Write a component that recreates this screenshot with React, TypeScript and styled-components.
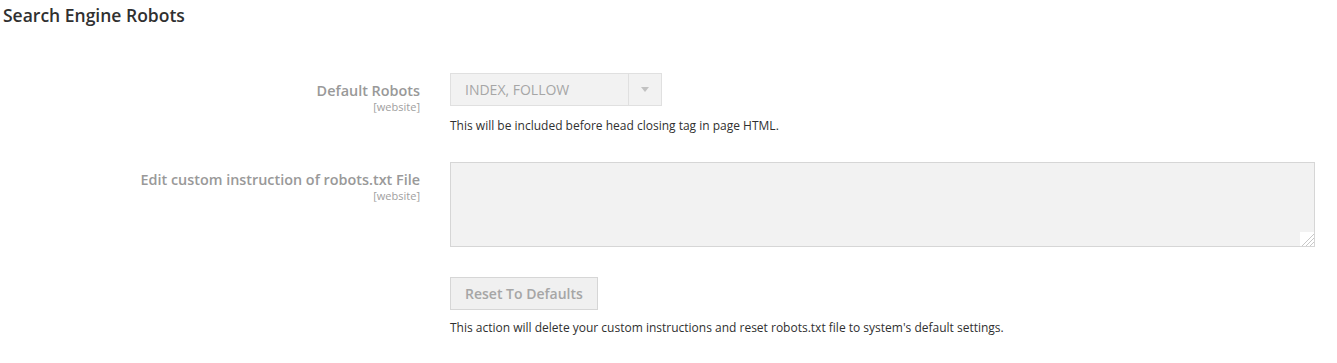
import React from 'react';
import styled, {createGlobalStyle} from 'styled-components';

const GlobalStyle = createGlobalStyle`
  body {
    margin: 0;
    background: #ffffff;
    font-family: "Open Sans", "Liberation Sans", sans-serif;
    color: #303030;
  }
`;

export default function App() {
  return (
      <Page>
        <GlobalStyle/>
        <Title>Search Engine Robots</Title>
        <Fieldset>
          <Row>
            <Label>
              <LabelText>Default Robots</LabelText>
              <Scope>[website]</Scope>
            </Label>
            <Control>
              <Select>
                <SelectValue>INDEX, FOLLOW</SelectValue>
                <SelectArrow>
                  <svg width="8" height="5" viewBox="0 0 8 5">
                    <path d="M0 0h8L4 5z" fill="#c2c2c2"/>
                  </svg>
                </SelectArrow>
              </Select>
              <Note>This will be included before head closing tag in page HTML.</Note>
            </Control>
          </Row>
          <Row $top={28}>
            <Label>
              <LabelText>Edit custom instruction of robots.txt File</LabelText>
              <Scope>[website]</Scope>
            </Label>
            <Control>
              <TextAreaWrap>
                <TextArea disabled/>
                <Resizer>
                  <svg width="14" height="14" viewBox="0 0 14 14">
                    <path d="M14 2L2 14M14 6L6 14M14 10L10 14" stroke="#c8c8c8" strokeWidth="1"/>
                  </svg>
                </Resizer>
              </TextAreaWrap>
            </Control>
          </Row>
          <Row $top={30}>
            <Label/>
            <Control>
              <Button disabled>Reset To Defaults</Button>
              <Note $top={10}>This action will delete your custom instructions and reset robots.txt file to system's default settings.</Note>
            </Control>
          </Row>
        </Fieldset>
      </Page>
  );
}

const Page = styled.div`
  padding: 4px 0 0 3px;
`;

const Title = styled.h3`
  margin: 0;
  font-size: 17.5px;
  font-weight: 600;
  line-height: 22px;
  color: #303030;
`;

const Fieldset = styled.div`
  padding-top: 47px;
  padding-right: 22px;
`;

const Row = styled.div<{ $top?: number }>`
  display: flex;
  gap: 30px;
  margin-top: ${p => p.$top ?? 0}px;
`;

const Label = styled.div`
  width: 417px;
  flex: none;
  display: flex;
  flex-direction: column;
  align-items: flex-end;
  padding-top: 8px;
`;

const LabelText = styled.span`
  font-size: 14.4px;
  font-weight: 600;
  line-height: 19px;
  color: #999999;
`;

const Scope = styled.span`
  font-size: 11px;
  line-height: 13px;
  color: #a0a0a0;
`;

const Control = styled.div`
  flex: 1;
  display: flex;
  flex-direction: column;
  align-items: flex-start;
`;

const Select = styled.div`
  box-sizing: border-box;
  width: 212px;
  height: 33px;
  display: flex;
  border: 1px solid #e0e0e0;
  background: #f2f2f2;
`;

const SelectValue = styled.span`
  flex: 1;
  padding-left: 14px;
  font-size: 14px;
  line-height: 31px;
  color: #a6a6a6;
`;

const SelectArrow = styled.span`
  width: 32px;
  border-left: 1px solid #e0e0e0;
  display: flex;
  align-items: center;
  justify-content: center;
`;

const Note = styled.div<{ $top?: number }>`
  margin-top: ${p => p.$top ?? 12}px;
  font-size: 12px;
  line-height: 16px;
  color: #303030;
`;

const TextAreaWrap = styled.div`
  position: relative;
  width: 100%;
`;

const TextArea = styled.textarea`
  box-sizing: border-box;
  width: 100%;
  height: 85px;
  margin: 0;
  border: 1px solid #d6d6d6;
  background: #f2f2f2;
  resize: none;
  display: block;
`;

const Resizer = styled.span`
  position: absolute;
  right: 1px;
  bottom: 1px;
  width: 14px;
  height: 14px;
  background: #ffffff;
  display: flex;
`;

const Button = styled.button`
  box-sizing: border-box;
  height: 33px;
  padding: 0 14px;
  border: 1px solid #d6d6d6;
  background: #f0f0f0;
  font-family: "Open Sans", "Liberation Sans", sans-serif;
  font-size: 14px;
  font-weight: 600;
  color: #a6a6a6;
`;
